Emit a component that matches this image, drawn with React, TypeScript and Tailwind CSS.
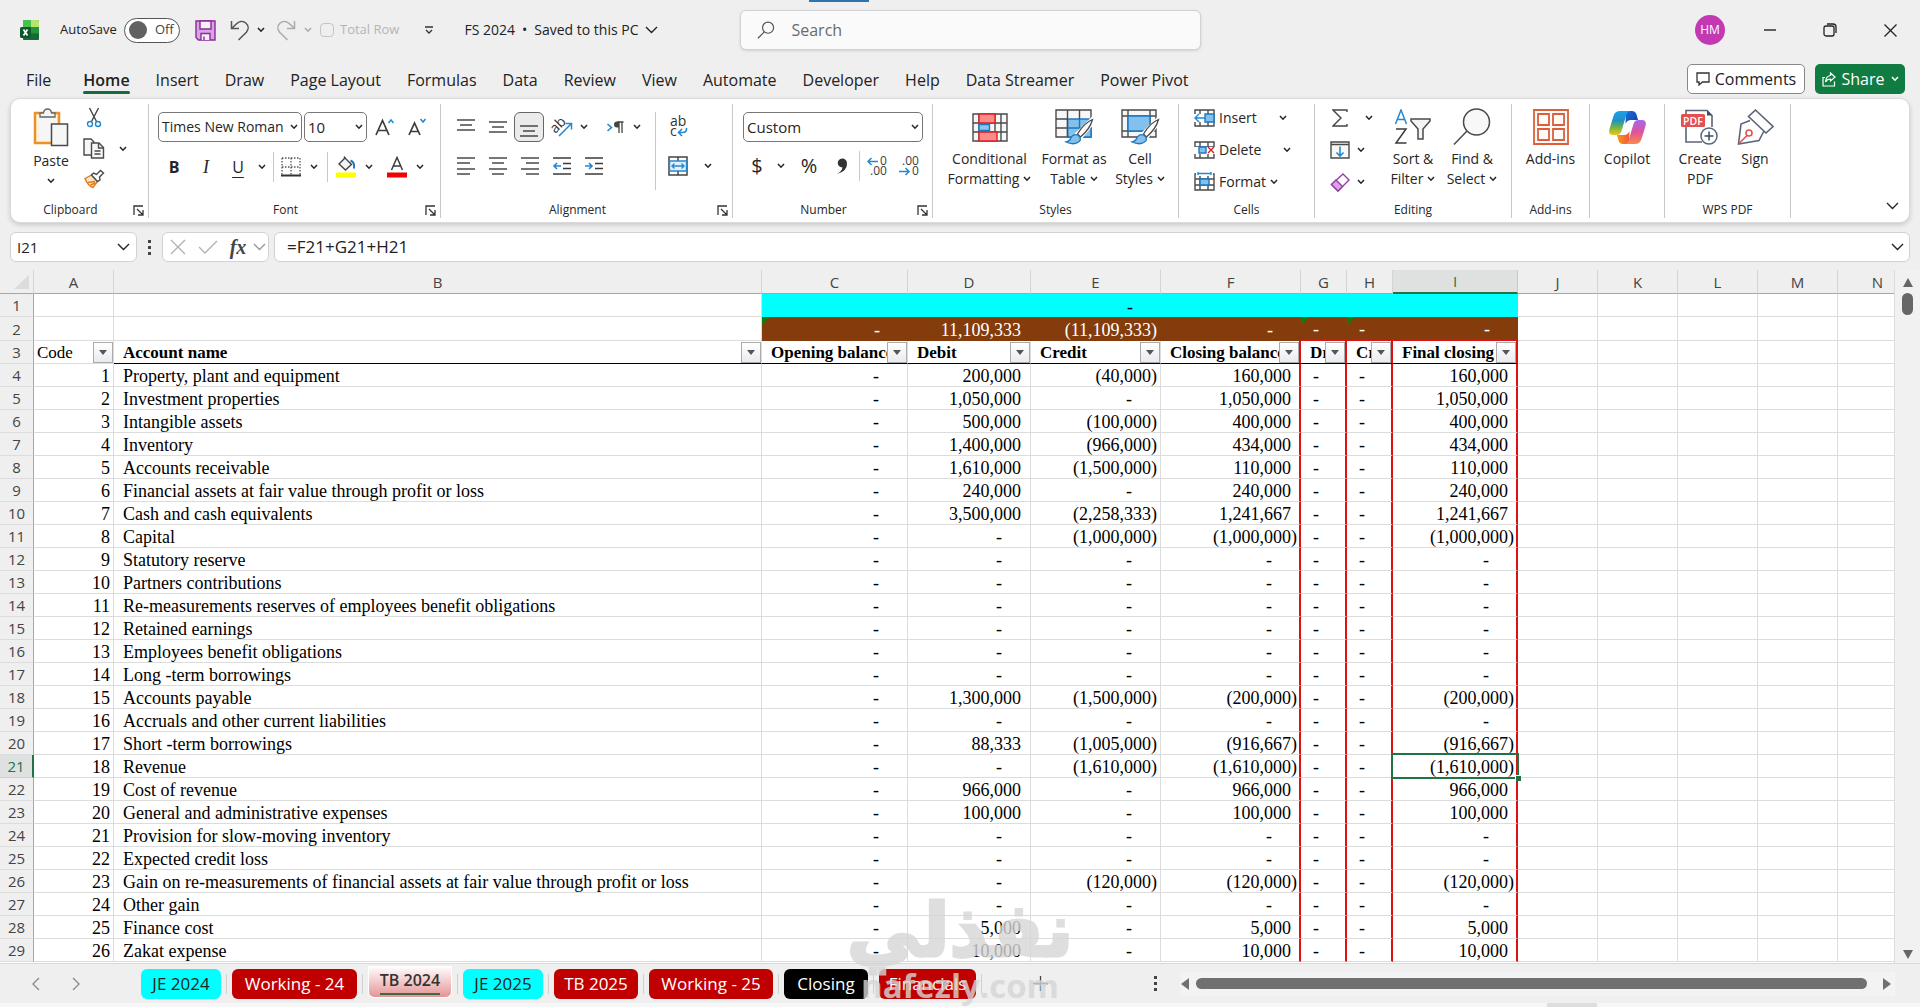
import React from 'react';

const UI = "font-['Open_Sans','Noto_Sans',sans-serif]";

function Chev({ big = false, className = '' }: { big?: boolean; className?: string }) {
  return big ? (
    <svg width="13" height="8" viewBox="0 0 13 8" className={className} fill="none" stroke="currentColor" strokeWidth="1.4">
      <path d="M1 1l5.5 5.5L12 1" />
    </svg>
  ) : (
    <svg width="8" height="6" viewBox="0 0 8 6" className={className} fill="none" stroke="currentColor" strokeWidth="1.5">
      <path d="M1 1l3 3.2L7 1" />
    </svg>
  );
}

function Btn({ label, className = '', children }: { label: string; className?: string; children?: React.ReactNode }) {
  return (
    <button type="button" aria-label={label} className={`flex shrink-0 items-center justify-center ${className}`}>
      {children}
    </button>
  );
}

function ChevBtn({ label, className = 'w-4' }: { label: string; className?: string }) {
  return (
    <Btn label={`${label} options`} className={`h-7 ${className}`}>
      <Chev />
    </Btn>
  );
}

function Group({ label, className, launcher = false, children }: { label?: string; className: string; launcher?: boolean; children: React.ReactNode }) {
  return (
    <section aria-label={label} className={`flex shrink-0 flex-col ${className}`}>
      <div className="mt-[5px] flex flex-col border-r border-[#c8c8c8]">
        <div className="h-[98px]">{children}</div>
        <div className="flex h-4 items-center">
          <span className="flex-1 text-center text-xs leading-4">{label}</span>
          {launcher && (
            <Btn label={`${label} settings`} className="mr-[2px] h-4 w-4">
              <svg width="11" height="11" viewBox="0 0 11 11" fill="none" stroke="#333" strokeWidth="1.3">
                <path d="M1 10V1h9M4 4l6 6M10 5v5H5" />
              </svg>
            </Btn>
          )}
        </div>
      </div>
    </section>
  );
}

function BigBtn({ icon, lines, chev = false, className }: { icon: React.ReactNode; lines: string[]; chev?: boolean; className: string }) {
  return (
    <button type="button" className={`flex shrink-0 flex-col items-center ${className}`}>
      <span className="mb-[3px] flex h-[38px] items-center">{icon}</span>
      {lines.map((l, i) => (
        <span key={l} className="flex items-center gap-1 whitespace-nowrap text-sm leading-5">
          {l}
          {chev && i === lines.length - 1 && <Chev />}
        </span>
      ))}
    </button>
  );
}

/* ---------- icons ---------- */

function Lines({ rows }: { rows: [number, number, number][] }) {
  return (
    <svg width="20" height="20" viewBox="0 0 20 20" stroke="#3b3b3b" strokeWidth="1.4">
      {rows.map(([x1, x2, y]) => (
        <path key={`${x1}-${y}`} d={`M${x1} ${y}H${x2}`} />
      ))}
    </svg>
  );
}

const ExcelLogo = () => (
  <svg width="20" height="21" viewBox="0 0 20 21">
    <rect x="3" y="0" width="16" height="20" rx="1.5" fill="#1a7a3e" />
    <path d="M3 1.5Q3 0 4.500 0H11V7H3z" fill="#46c24c" />
    <path d="M11 0h6.500Q19 0 19 1.500V7h-8z" fill="#b5e56b" />
    <path d="M11 7h8v6h-8z" fill="#26943f" />
    <path d="M3 14h16v4.500Q19 20 17.500 20h-13Q3 20 3 18.500z" fill="#156b33" />
    <rect x="0" y="7" width="11" height="11" rx="1.500" fill="#0c5a2c" />
    <path d="M3.500 9.500l4 6M7.500 9.500l-4 6" stroke="#fff" strokeWidth="1.700" />
  </svg>
);

const SaveIcon = () => (
  <svg width="21" height="21" viewBox="0 0 21 21" fill="#d9a3e4" stroke="#8a2a9b" strokeWidth="1.400">
    <path d="M1 1h19v19H3.500L1 17.500z" />
    <path d="M5 1h11v8H5z" fill="#f4f0f5" />
    <path d="M6 20v-6.500h9V20" fill="#f4f0f5" />
    <path d="M9 16.500V20" />
  </svg>
);

const UndoIcon = ({ flip = false }: { flip?: boolean }) => (
  <svg width="20" height="21" viewBox="0 0 20 21" fill="none" stroke="currentColor" strokeWidth="1.500" className={flip ? '-scale-x-100' : ''}>
    <path d="M1.500 1v7.500H9M1.800 8.300L6 4.200C9 1.200 13 .6 15.800 3c3 2.600 3 6.400.6 9.200L8.500 20" />
  </svg>
);

const PasteIcon = () => (
  <svg width="36" height="40" viewBox="0 0 36 40">
    <path d="M2 6h24v30H2z" fill="#fdf3df" stroke="#e8912d" strokeWidth="2.500" />
    <path d="M6 9h16v24H6z" fill="#f6f6f6" />
    <path d="M7 10V6h3.500Q11 2 14.500 2T18.500 6H22v4z" fill="#f5f5f5" stroke="#666" strokeWidth="1.300" />
    <path d="M18.500 17h16v21.500h-16z" fill="#f6f6f6" stroke="#4a4a4a" strokeWidth="1.500" />
  </svg>
);

const CutIcon = () => (
  <svg width="16" height="21" viewBox="0 0 16 21" fill="none" strokeWidth="1.400">
    <path d="M3.500 1l7 13.500M12.500 1l-7 13.500" stroke="#444" />
    <circle cx="4" cy="17" r="2.500" stroke="#2488d0" />
    <circle cx="12" cy="17" r="2.500" stroke="#2488d0" />
  </svg>
);

const CopyIcon = () => (
  <svg width="22" height="21" viewBox="0 0 22 21" fill="#f6f6f6" stroke="#4a4a4a" strokeWidth="1.400">
    <path d="M1 1h7l3 3v13H1z" />
    <path d="M8.500 5H16l4.500 4.500V20h-12z" />
    <path d="M15.500 5v5h5M11.500 13h6M11.500 16h6" fill="none" />
  </svg>
);

const BrushIcon = () => (
  <svg width="22" height="20" viewBox="0 0 22 20" strokeWidth="1.400">
    <path d="M2 9.500L8.500 6l6 6.500L10 18.500C6.500 17.500 4 14.500 2 9.500z" fill="#fbe3c4" stroke="#e07b1a" />
    <path d="M5 13.500l7-1M7.500 16l5-2" stroke="#e07b1a" fill="none" />
    <path d="M8.500 6l2-2 3 1.500 4-4 3 2.500-4 4 .5 3-2.500 1.500z" fill="#fff" stroke="#4a4a4a" />
  </svg>
);

const GrowA = ({ down = false }: { down?: boolean }) => (
  <svg width="22" height="20" viewBox="0 0 22 20" fill="none">
    <path d={down ? 'M3 18L8.500 6 14 18M5 14.500h7' : 'M2 18L8.500 3.500 15 18M4.500 13.500h8'} stroke="#3b3b3b" strokeWidth="1.700" />
    <path d={down ? 'M14.500 2l2.500 3L19.500 2' : 'M14.500 6L17 3l2.500 3'} stroke="#2488d0" strokeWidth="1.500" />
  </svg>
);

const BordersIcon = () => (
  <svg width="20" height="20" viewBox="0 0 20 20" fill="none" stroke="#555" strokeWidth="1.300">
    <path d="M1 1h18M1 10h18M1 1v17M10 1v17M19 1v17" strokeDasharray="1.500 1.500" />
    <path d="M0 18.500h20" stroke="#333" strokeWidth="2" />
  </svg>
);

const FillIcon = () => (
  <svg width="22" height="22" viewBox="0 0 22 22">
    <path d="M10 2l6.500 6.500-6 5.500-6.500-6z" fill="#f4f4f4" stroke="#444" strokeWidth="1.400" />
    <path d="M10 2l-1-1.500" stroke="#444" strokeWidth="1.400" />
    <path d="M15.500 4.500c3 1 4 4 3.500 8" stroke="#1f78b8" strokeWidth="2" fill="none" />
    <rect x="1" y="16.500" width="20" height="5" fill="#ff0" />
  </svg>
);

const FontColorIcon = () => (
  <svg width="22" height="22" viewBox="0 0 22 22" fill="none">
    <path d="M5.500 14L11 1.500 16.500 14M7.500 10h7" stroke="#3b3b3b" strokeWidth="1.500" />
    <rect x="1" y="16.500" width="20" height="5" fill="#f00000" />
  </svg>
);

const OrientIcon = () => (
  <svg width="22" height="22" viewBox="0 0 22 22" fill="none" className="overflow-visible">
    <text x="1" y="16" fontSize="14" fill="#333" transform="rotate(-45 5 13)" fontFamily="Open Sans">ab</text>
    <path d="M8 20L20 8M14.500 7.500H20.500V13.500" stroke="#2488d0" strokeWidth="1.500" />
  </svg>
);

const ParaIcon = () => (
  <svg width="18" height="16" viewBox="0 0 18 16" fill="none">
    <path d="M1.500 5l4 3.500-4 3.500" stroke="#2488d0" strokeWidth="1.600" />
    <path d="M13 3v11M16 3v11M17.500 3H11.500" stroke="#444" strokeWidth="1.300" />
    <path d="M13 2.500h-2a3 3 0 000 6h2z" fill="#444" />
  </svg>
);

const WrapIcon = () => (
  <svg width="20" height="22" viewBox="0 0 20 22" fill="none" className="overflow-visible">
    <text x="2" y="10" fontSize="14" fill="#333" fontFamily="Open Sans">ab</text>
    <text x="2" y="20" fontSize="14" fill="#333" fontFamily="Open Sans">c</text>
    <path d="M18.500 12q.5 4.500-4 4.500H10.500M14 13l-3.500 3.500 3.500 3.500" stroke="#2488d0" strokeWidth="1.600" />
  </svg>
);

const MergeIcon = () => (
  <svg width="20" height="20" viewBox="0 0 20 20" fill="none">
    <path d="M1 1h18v18H1zM10 1v4M10 15v4" stroke="#444" strokeWidth="1.500" />
    <path d="M1.500 5h17v10h-17z" fill="#e3f1fb" stroke="#2488d0" strokeWidth="1.400" />
    <path d="M4 10h12M6.500 7.500L4 10l2.500 2.500M13.500 7.500L16 10l-2.500 2.500" stroke="#2488d0" strokeWidth="1.400" />
  </svg>
);

const IndentIcon = ({ inc = false }: { inc?: boolean }) => (
  <svg width="20" height="20" viewBox="0 0 20 20" fill="none" strokeWidth="1.400">
    <path d="M1 2h18M11 7.500h8M11 12.500h8M1 18h18" stroke="#3b3b3b" />
    <path d={inc ? 'M1 10h7M5 7l3 3-3 3' : 'M2 10h7M5 7l-3 3 3 3'} stroke="#2488d0" strokeWidth="1.600" />
  </svg>
);

const DecimalIcon = ({ dec = false }: { dec?: boolean }) => (
  <svg width="22" height="22" viewBox="0 0 22 22" fill="none" className="overflow-visible">
    <g fill="#3b3b3b" fontSize="12" fontFamily="Open Sans">
      <text x={dec ? 4 : 14} y="10">{dec ? '.00' : '0'}</text>
      <text x={dec ? 14 : 4} y="20">{dec ? '0' : '.00'}</text>
    </g>
    <path d={dec ? 'M1 16.500h10M7.500 13l3.500 3.500L7.500 20' : 'M2 6.500h10M5.500 3L2 6.500 5.500 10'} stroke="#2488d0" strokeWidth="1.500" />
  </svg>
);

const CondIcon = () => (
  <svg width="36" height="29" viewBox="0 0 36 29" fill="#f7f7f7" strokeWidth="1.400">
    <path d="M1 1h34v27H1z" stroke="#4a4a4a" />
    <path d="M1 10h34M1 19h34M7 1v27M23 1v27M29 1v27" stroke="#4a4a4a" />
    <path d="M7 1h16v9H7zM7 19h18v9H7z" fill="#f98b8b" stroke="#d22" />
    <path d="M7 11.500h10.500v6H7z" fill="#8cc4ee" stroke="#1c78c0" />
  </svg>
);

const BrushOver = () => (
  <g>
    <path d="M37.500 10L22 25l3 4 13-16z" stroke="#fff" strokeWidth="4" fill="#fff" />
    <path d="M37.500 10.500Q29 14 22.500 25l3 3Q35 20 37.500 10.500z" fill="#fff" stroke="#4a4a4a" strokeWidth="1.300" />
    <path d="M11 33q4-1 5-4.500 3.500-5 8-1.500 3 4-.5 6-5 3.500-12.500 0z" fill="#83c0ec" stroke="#1c78c0" strokeWidth="1.300" />
  </g>
);

const TableIcon = () => (
  <svg width="39" height="36" viewBox="0 0 39 36" fill="#f7f7f7" strokeWidth="1.400">
    <path d="M1 1h35v27H1z" stroke="#4a4a4a" />
    <path d="M12.500 10H36v18H12.500z" fill="#83c0ec" stroke="#1c78c0" />
    <path d="M1 10h11M1 19h11M12.500 1v27M24.500 1v9" stroke="#4a4a4a" />
    <path d="M12.500 19H36M24.500 10v18" stroke="#1c78c0" />
    <BrushOver />
  </svg>
);

const CellStyleIcon = () => (
  <svg width="39" height="36" viewBox="0 0 39 36" fill="#f7f7f7" strokeWidth="1.400">
    <path d="M1 1h34v27H1zM1 7h34M1 22h34M7 1v27M29 1v27" stroke="#4a4a4a" />
    <path d="M7 7h22v15H7z" fill="#83c0ec" stroke="#1c78c0" />
    <BrushOver />
  </svg>
);

const CellsIcon = ({ kind }: { kind: 'insert' | 'delete' | 'format' }) => (
  <svg width="21" height="20" viewBox="0 0 21 20" fill="none" strokeWidth="1.400">
    <path d="M1 2h19v16H1zM1 7h19M1 13h19M6 2v16M14 2v16" stroke="#4a4a4a" />
    {kind === 'insert' && (
      <>
        <path d="M0 6h11v8H0z" fill="#fff" />
        <path d="M11 6h9v8h-9z" fill="#83c0ec" stroke="#1c78c0" />
        <path d="M1 10h10M5 6l-4 4 4 4" stroke="#2488d0" />
      </>
    )}
    {kind === 'delete' && (
      <>
        <path d="M0 7h21v7H0z" fill="#fff" />
        <path d="M5 7h7v6H5z" fill="#83c0ec" stroke="#1c78c0" />
        <path d="M14 7l6 6M20 7l-6 6" stroke="#e02020" />
      </>
    )}
    {kind === 'format' && (
      <>
        <path d="M2 0h17v4H2z" fill="#fff" />
        <path d="M4 1.500h13M4 0v3M17 0v3" stroke="#2488d0" />
        <path d="M6 7h9v6H6z" fill="#83c0ec" stroke="#1c78c0" />
      </>
    )}
  </svg>
);

const SumIcon = () => (
  <svg width="16" height="18" viewBox="0 0 16 18" fill="none" stroke="#444" strokeWidth="1.400">
    <path d="M15 3V1H1l8 8-8 8h14v-2" />
  </svg>
);

const FillDownIcon = () => (
  <svg width="20" height="18" viewBox="0 0 20 18" fill="#f7f7f7" stroke="#4a4a4a" strokeWidth="1.400">
    <path d="M1 1h18v16H1zM1 3.500h18" />
    <path d="M10 5.500V15M6.500 11.500L10 15l3.500-3.500" stroke="#2488d0" fill="none" strokeWidth="1.600" />
  </svg>
);

const EraserIcon = () => (
  <svg width="20" height="19" viewBox="0 0 20 19" strokeWidth="1.400" stroke="#963ca8">
    <path d="M13 1l6 6-11 11-6.500-6.500z" fill="#fff" />
    <path d="M6 7l6.500 6.500L8 18l-6.500-6.500z" fill="#d9a3e4" />
  </svg>
);

const SortIcon = () => (
  <svg width="38" height="37" viewBox="0 0 38 37" fill="none" strokeWidth="1.500">
    <path d="M1.500 15L7 1l5.500 14M3.500 10.500h7" stroke="#2488d0" />
    <path d="M2 20h10L2 34h10.500" stroke="#3b3b3b" />
    <path d="M17 10h19v2l-7 8v10h-5V20l-7-8z" fill="#f4f4f4" stroke="#4a4a4a" />
  </svg>
);

const FindIcon = () => (
  <svg width="38" height="38" viewBox="0 0 38 38" fill="#f8f8f8" stroke="#4a4a4a" strokeWidth="1.500">
    <circle cx="23.500" cy="14" r="13" />
    <path d="M14 23L1 36.500" />
  </svg>
);

const AddinsIcon = () => (
  <svg width="36" height="36" viewBox="0 0 36 36" fill="#fdfbfa" stroke="#dc5f3a" strokeWidth="1.800">
    <path d="M1 1h34v34H1z" />
    <path d="M5 5h11v11H5zM20 5h11v11H20zM5 20h11v11H5zM20 20h11v11H20z" />
  </svg>
);

const CopilotIcon = () => (
  <svg width="37" height="35" viewBox="0 0 37 35">
    <defs>
      <linearGradient id="cpA" x1="0" y1="0" x2="0" y2="1">
        <stop offset="0" stopColor="#1aa2ea" />
        <stop offset=".4" stopColor="#2290c4" />
        <stop offset=".7" stopColor="#76b83c" />
        <stop offset="1" stopColor="#f3c51c" />
      </linearGradient>
      <linearGradient id="cpB" x1="0" y1="0" x2="0" y2="1">
        <stop offset="0" stopColor="#a566ee" />
        <stop offset=".5" stopColor="#e0529b" />
        <stop offset="1" stopColor="#f88a48" />
      </linearGradient>
      <linearGradient id="cpC" x1="0" y1="0" x2="1" y2="1">
        <stop offset="0" stopColor="#1a6fe0" />
        <stop offset="1" stopColor="#163e9e" />
      </linearGradient>
      <linearGradient id="cpD" x1="0" y1="0" x2="1" y2="0">
        <stop offset="0" stopColor="#f39a1e" />
        <stop offset="1" stopColor="#f2573a" />
      </linearGradient>
    </defs>
    <path d="M17 1h6q3.500 0 4.500 3.500L29 10h-7q-4 0-5.500 4z" fill="url(#cpC)" />
    <path d="M20 34h-6q-3.500 0-4.500-3.500L8 25h7q4 0 5.500-4z" fill="url(#cpD)" />
    <path d="M11 1h9.500q-2.500 1-3.500 5l-4.500 15q-1.200 4-5 4H4q-5 0-3.500-6L4.500 6Q6 1 11 1z" fill="url(#cpA)" />
    <path d="M26 34h-9.500q2.500-1 3.500-5l4.500-15q1.200-4 5-4H33q5 0 3.500 6l-4 13Q31 34 26 34z" fill="url(#cpB)" />
  </svg>
);

const PdfIcon = () => (
  <svg width="38" height="36" viewBox="0 0 38 36" fill="none">
    <path d="M5 6V1.500h21l5 5V18M5 18v15h16" stroke="#5b6478" strokeWidth="1.600" />
    <path d="M26 1.500V6.500h5z" fill="#3f4a63" />
    <rect x="0" y="5" width="24" height="13" rx="1.500" fill="#e2504f" />
    <text x="2" y="15.500" fontSize="10.500" fill="#fff" fontFamily="Open Sans" fontWeight="600">PDF</text>
    <circle cx="28" cy="27" r="8" stroke="#5b6478" strokeWidth="1.500" fill="#fff" />
    <path d="M28 22.500v9M23.500 27h9" stroke="#3f4a63" strokeWidth="1.500" />
  </svg>
);

const SignIcon = () => (
  <svg width="37" height="36" viewBox="0 0 37 36" fill="none" stroke="#5b6478" strokeWidth="1.600">
    <path d="M18.500 1L36 17.500l-7 6.500L11.500 7.500z" />
    <path d="M13 11.500L4 15 1.500 35 22 31.500 27 22" />
    <circle cx="12" cy="24" r="3" stroke="#e2504f" />
    <path d="M10 26.500L2 34.500" stroke="#e2504f" />
  </svg>
);

/* ---------- data ---------- */

const ribbonTabs = ['File', 'Home', 'Insert', 'Draw', 'Page Layout', 'Formulas', 'Data', 'Review', 'View', 'Automate', 'Developer', 'Help', 'Data Streamer', 'Power Pivot'];

// [account name, debit, credit, closing balance]
const accounts: [string, string, string, string][] = [
  ['Property, plant and equipment', '200,000', '(40,000)', '160,000'],
  ['Investment properties', '1,050,000', '-', '1,050,000'],
  ['Intangible assets', '500,000', '(100,000)', '400,000'],
  ['Inventory', '1,400,000', '(966,000)', '434,000'],
  ['Accounts receivable', '1,610,000', '(1,500,000)', '110,000'],
  ['Financial assets at fair value through profit or loss', '240,000', '-', '240,000'],
  ['Cash and cash equivalents', '3,500,000', '(2,258,333)', '1,241,667'],
  ['Capital', '-', '(1,000,000)', '(1,000,000)'],
  ['Statutory reserve', '-', '-', '-'],
  ['Partners contributions', '-', '-', '-'],
  ['Re-measurements reserves of employees benefit obligations', '-', '-', '-'],
  ['Retained earnings', '-', '-', '-'],
  ['Employees benefit obligations', '-', '-', '-'],
  ['Long -term borrowings', '-', '-', '-'],
  ['Accounts payable', '1,300,000', '(1,500,000)', '(200,000)'],
  ['Accruals and other current liabilities', '-', '-', '-'],
  ['Short -term borrowings', '88,333', '(1,005,000)', '(916,667)'],
  ['Revenue', '-', '(1,610,000)', '(1,610,000)'],
  ['Cost of revenue', '966,000', '-', '966,000'],
  ['General and administrative expenses', '100,000', '-', '100,000'],
  ['Provision for slow-moving inventory', '-', '-', '-'],
  ['Expected credit loss', '-', '-', '-'],
  ['Gain on re-measurements of financial assets at fair value through profit or loss', '-', '(120,000)', '(120,000)'],
  ['Other gain', '-', '-', '-'],
  ['Finance cost', '5,000', '-', '5,000'],
  ['Zakat expense', '10,000', '-', '10,000'],
];

const columns: [string, string][] = [
  ['A', 'w-20'],
  ['B', 'w-[648px]'],
  ['C', 'w-[146px]'],
  ['D', 'w-[123px]'],
  ['E', 'w-[130px]'],
  ['F', 'w-[140px]'],
  ['G', 'w-[46px]'],
  ['H', 'w-[46px]'],
  ['I', 'w-[125px]'],
  ['J', 'w-20'],
  ['K', 'w-20'],
  ['L', 'w-20'],
  ['M', 'w-20'],
  ['N', 'w-20'],
];

const CELL = 'p-0 pt-[2px] leading-5';
const GRID = 'border-b border-r border-[#dcdcdc]';
const RED = 'border-b border-r-2 border-b-[#dcdcdc] border-r-[#dd1111]';

function padFor(v: string) {
  if (v === '-') return 'pr-7';
  return v.startsWith('(') ? 'pr-[3px]' : 'pr-[9px]';
}

function Num({ v, red = false, active = false }: { v: string; red?: boolean; active?: boolean }) {
  return (
    <td className={`relative text-right ${CELL} ${red ? RED : GRID}`}>
      <div className={red ? '-mr-px' : ''}>
        <div className={padFor(v)}>{v}</div>
      </div>
      {active && (
        <span className="absolute -bottom-[2px] -left-[2px] -right-[3px] -top-[2px] z-10 border-2 border-[#217346]">
          <span className="absolute -bottom-[4px] -right-[4px] h-[6px] w-[6px] border-l border-t border-white bg-[#217346]" />
        </span>
      )}
    </td>
  );
}

function RowHead({ n }: { n: number }) {
  const active = n === 21;
  return (
    <th
      scope="row"
      className={`border-b p-0 text-center font-['Open_Sans','Noto_Sans',sans-serif] text-[15px] font-normal leading-[22px] ${
        active ? 'border-r-2 border-b-[#d0d0d0] border-r-[#217346] bg-[#dfe1e0] text-[#217346]' : 'border-r border-b-[#dcdcdc] border-r-[#a6a6a6] bg-[#efefef] text-[#444]'
      }`}
    >
      {n}
    </th>
  );
}

function Filter({ label, name, className = '' }: { label: string; name: string; className?: string }) {
  return (
    <div className={`flex h-[22px] items-center overflow-hidden whitespace-nowrap ${className}`}>
      <span className="min-w-0 flex-1 overflow-hidden pt-[2px] leading-5">{label}</span>
      <button
        type="button"
        aria-label={`Filter ${name}`}
        className="flex h-[21px] w-5 shrink-0 items-center justify-center border border-[#ababab] bg-gradient-to-b from-white to-[#e9ebf0]"
      >
        <span className="border-x-4 border-t-[5px] border-x-transparent border-t-[#555]" />
      </button>
    </div>
  );
}

function Blank({ n = 5 }: { n?: number }) {
  return (
    <>
      {Array.from({ length: n }, (_, i) => (
        <td key={i} className={GRID} />
      ))}
    </>
  );
}

function Sheet() {
  const tri = <span className="absolute left-0 top-0 border-r-8 border-t-8 border-r-transparent border-t-[#107c10]" />;
  return (
    <table className="w-[1918px] table-fixed border-separate border-spacing-0 bg-white font-['Liberation_Serif',serif] text-lg text-black">
      <colgroup>
        <col className="w-[34px]" />
        {columns.map(([c, w]) => (
          <col key={c} className={w} />
        ))}
      </colgroup>
      <thead>
        <tr className={`h-6 bg-[#efefef] ${UI} text-[15px] leading-[22px] text-[#444]`}>
          <th className="border-b border-r border-b-[#a6a6a6] border-r-[#d4d4d4] p-0">
            <svg width="16" height="14" viewBox="0 0 16 14" className="ml-[14px]">
              <path d="M15 0v14H0z" fill="#dcdcdc" />
            </svg>
          </th>
          {columns.map(([c]) => (
            <th
              key={c}
              scope="col"
              className={
                c === 'I'
                  ? 'border-b-2 border-r border-b-[#217346] border-r-[#c9c9c9] bg-[#dfe1e0] p-0 font-normal text-[#217346]'
                  : 'border-b border-r border-b-[#a6a6a6] border-r-[#d4d4d4] p-0 font-normal'
              }
            >
              {c}
            </th>
          ))}
        </tr>
      </thead>
      <tbody>
        <tr className="h-[23px]">
          <RowHead n={1} />
          <td className={GRID} />
          <td className={GRID} />
          <td colSpan={7} className={`bg-[#00ffff] ${CELL}`}>
            <div className="ml-[269px] w-[130px] pr-7 text-right">-</div>
          </td>
          <Blank />
        </tr>
        <tr className="h-6 text-white">
          <RowHead n={2} />
          <td className={GRID} />
          <td className={GRID} />
          <td className={`relative bg-[#843c0c] text-right ${CELL}`}>{tri}<div className="pr-7">-</div></td>
          <td className={`bg-[#843c0c] text-right ${CELL}`}><div className="pr-[10px]">11,109,333</div></td>
          <td className={`bg-[#843c0c] text-right ${CELL}`}><div className="pr-1">(11,109,333)</div></td>
          <td className={`bg-[#843c0c] text-right ${CELL}`}><div className="pr-7">-</div></td>
          <td className={`relative border-b-2 border-[#dd1111] bg-[#843c0c] ${CELL}`}>{tri}<div className="pl-3">-</div></td>
          <td className={`relative border-b-2 border-[#dd1111] bg-[#843c0c] ${CELL}`}>{tri}<div className="pl-3">-</div></td>
          <td className={`border-b-2 border-[#dd1111] bg-[#843c0c] text-right ${CELL}`}><div className="pr-7">-</div></td>
          <Blank />
        </tr>
        <tr className="h-[23px] text-[17px] font-bold">
          <RowHead n={3} />
          <td className={`p-0 font-normal ${GRID}`}>
            <Filter label="Code" name="Code" className="pl-[3px]" />
          </td>
          {['Account name', 'Opening balance', 'Debit', 'Credit'].map((h) => (
            <td key={h} className="border-b border-r border-b-black border-r-[#dcdcdc] p-0">
              <Filter label={h} name={h} className="pl-[9px]" />
            </td>
          ))}
          {['Closing balance', 'Dr', 'Cr', 'Final closing'].map((h) => (
            <td key={h} className="border-b border-r-2 border-b-black border-r-[#dd1111] p-0">
              <Filter label={h} name={h} className="pl-[9px]" />
            </td>
          ))}
          <Blank />
        </tr>
        {accounts.map(([name, debit, credit, closing], i) => (
          <tr key={name} className="h-[23px]">
            <RowHead n={i + 4} />
            <td className={`text-right ${CELL} ${GRID}`}><div className="pr-[3px]">{i + 1}</div></td>
            <td className={`${CELL} ${GRID}`}><div className="pl-[9px]">{name}</div></td>
            <Num v="-" />
            <Num v={debit} />
            <Num v={credit} />
            <Num v={closing} red />
            <td className={`${CELL} ${RED}`}><div className="pl-3">-</div></td>
            <td className={`${CELL} ${RED}`}><div className="pl-3">-</div></td>
            <Num v={closing} red active={i + 4 === 21} />
            <Blank />
          </tr>
        ))}
      </tbody>
    </table>
  );
}

const sheetTabs: [string, string][] = [
  ['JE 2024', 'w-20 bg-[#00ffff] text-[#222]'],
  ['Working - 24', 'w-[125px] bg-[#c00000] text-white'],
  ['TB 2024', ''],
  ['JE 2025', 'w-20 bg-[#00ffff] text-[#222]'],
  ['TB 2025', 'w-[84px] bg-[#c00000] text-white'],
  ['Working - 25', 'w-[124px] bg-[#c00000] text-white'],
  ['Closing', 'w-[84px] bg-black text-white'],
  ['Financials', 'w-[97px] bg-[#c00000] text-white'],
];

/* ---------- page ---------- */

function TitleBar() {
  return (
    <header className="relative flex h-[60px] items-center">
      <div className="flex w-[740px] shrink-0 items-center pl-5 text-[13px]">
        <ExcelLogo />
        <label className="ml-5 flex items-center">
          <span className="w-[64px]">AutoSave</span>
          <input type="checkbox" role="switch" className="sr-only" />
          <span className="flex h-[25px] w-14 items-center gap-2 rounded-full border border-[#555] bg-white pl-1 text-[#444]">
            <span className="h-[18px] w-[18px] rounded-full bg-[#616161]" />
            Off
          </span>
        </label>
        <Btn label="Save" className="ml-[15px]"><SaveIcon /></Btn>
        <Btn label="Undo" className="ml-[14px] text-[#555]"><UndoIcon /></Btn>
        <Btn label="Undo history" className="w-[22px]"><Chev /></Btn>
        <Btn label="Redo" className="ml-1 text-[#aaa]"><UndoIcon flip /></Btn>
        <Btn label="Redo history" className="w-6 text-[#aaa]"><Chev /></Btn>
        <label className="flex items-center gap-[6px] text-[#b5b5b5]">
          <input type="checkbox" disabled className="h-[14px] w-[14px] appearance-none rounded-sm border border-[#c4c4c4]" />
          Total Row
        </label>
        <Btn label="Customize toolbar" className="ml-5 w-5">
          <svg width="10" height="8" viewBox="0 0 10 8" fill="none" stroke="#333" strokeWidth="1.300"><path d="M1 1h8M2 4l3 3 3-3" /></svg>
        </Btn>
        <button type="button" className="ml-[25px] flex items-center gap-[7px] whitespace-nowrap text-sm">
          <span>FS 2024</span><span>•</span><span>Saved to this PC</span>
          <Chev big />
        </button>
      </div>
      <span className="absolute left-[809px] top-0 h-[2px] w-[60px] bg-[#2e75b0]" />
      <label className="flex h-10 w-[461px] items-center gap-4 rounded-md border border-[#d2d2d2] bg-[#fafafa] pl-4 shadow-sm">
        <svg width="20" height="20" viewBox="0 0 20 20" fill="none" stroke="#555" strokeWidth="1.300">
          <circle cx="12" cy="7.500" r="6" /><path d="M8 12L1 19" />
        </svg>
        <input aria-label="Search" placeholder="Search" className="w-full bg-transparent text-base outline-none placeholder:text-[#6a6a6a]" />
      </label>
      <div className="ml-auto flex items-center">
        <Btn label="Account" className="mr-[15px] h-[30px] w-[30px] rounded-full bg-[#c239b3] text-xs text-white">HM</Btn>
        <Btn label="Minimize" className="h-8 w-[60px]"><svg width="12" height="2"><path d="M0 1h12" stroke="#222" strokeWidth="1.400" /></svg></Btn>
        <Btn label="Restore" className="h-8 w-[60px]">
          <svg width="14" height="14" viewBox="0 0 14 14" fill="none" stroke="#222" strokeWidth="1.300">
            <rect x="1" y="3" width="10" height="10" rx="2" /><path d="M4 1h6q3 0 3 3v6" />
          </svg>
        </Btn>
        <Btn label="Close" className="h-8 w-[60px]"><svg width="13" height="13"><path d="M.5.5l12 12M12.500.5l-12 12" stroke="#222" strokeWidth="1.300" /></svg></Btn>
      </div>
    </header>
  );
}

function TabBar() {
  return (
    <nav className="flex h-[38px] items-center pl-[26px] pr-[15px]">
      <div className="flex gap-[26px] pt-[2px] text-base leading-5">
        {ribbonTabs.map((t) => (
          <button
            key={t}
            type="button"
            className={
              t === 'Home'
                ? "relative ml-[6px] whitespace-nowrap font-semibold after:absolute after:-bottom-[4px] after:left-0 after:h-[3px] after:w-full after:rounded after:bg-[#176b3c] after:content-['']"
                : 'whitespace-nowrap'
            }
          >
            {t}
          </button>
        ))}
      </div>
      <button type="button" className="ml-auto flex h-[30px] w-[118px] items-center justify-center gap-[5px] rounded-[5px] border border-[#888] bg-white text-base">
        <svg width="14" height="14" viewBox="0 0 14 14" fill="none" stroke="#333" strokeWidth="1.300"><path d="M1 1h12v9H6.500L3 13v-3H1z" /></svg>
        Comments
      </button>
      <button type="button" className="ml-[10px] flex h-[30px] w-[90px] items-center justify-center gap-[6px] rounded-[5px] bg-[#107c41] text-base text-white">
        <svg width="14" height="15" viewBox="0 0 14 15" fill="none" stroke="#fff" strokeWidth="1.200">
          <path d="M3 5.500H1V14h11.500V9.500M8.500 1l4.500 4-4.500 4V7Q5 7 3.500 10 4 4 8.500 3.500z" />
        </svg>
        Share
        <Chev />
      </button>
    </nav>
  );
}

function ComboBox({ value, name, className, size = 'text-[15px]' }: { value: string; name: string; className: string; size?: string }) {
  return (
    <span className={`relative flex shrink-0 items-center ${className}`}>
      <select aria-label={name} className={`h-[30px] w-full appearance-none overflow-hidden rounded-[5px] border border-[#777] bg-white pl-[3px] pr-4 ${size}`}>
        <option>{value}</option>
      </select>
      <Chev className="pointer-events-none absolute right-1" />
    </span>
  );
}

function Ribbon() {
  const vline = <span className="h-[30px] w-px shrink-0 bg-[#c8c8c8]" />;
  return (
    <div className="mx-[10px] flex h-[125px] rounded-[10px] border border-[#dadada] bg-white text-[#262626] shadow-[0_2px_5px_rgba(0,0,0,0.16)]">
      <Group label="Clipboard" className="w-[138px]" launcher>
        <div className="flex pt-[3px]">
          <button type="button" className="ml-[18px] flex w-11 flex-col items-center text-sm leading-5">
            <PasteIcon />
            <span className="mt-1">Paste</span>
            <Chev className="mt-[7px]" />
          </button>
          <div className="ml-[10px] flex w-[22px] flex-col items-center gap-[10px]">
            <Btn label="Cut"><CutIcon /></Btn>
            <Btn label="Copy"><CopyIcon /></Btn>
            <Btn label="Format Painter"><BrushIcon /></Btn>
          </div>
          <ChevBtn label="Copy" className="ml-[10px] mt-7 w-4" />
        </div>
      </Group>

      <Group label="Font" className="w-[292px]" launcher>
        <div className="flex items-center pl-[9px] pt-2">
          <ComboBox name="Font" value="Times New Roman" className="w-[144px]" size="text-sm" />
          <ComboBox name="Font size" value="10" className="ml-[2px] w-[63px]" />
          <Btn label="Increase font size" className="ml-[7px] h-7 w-[22px]"><GrowA /></Btn>
          <Btn label="Decrease font size" className="ml-[10px] h-7 w-[22px]"><GrowA down /></Btn>
        </div>
        <div className="mt-[10px] flex items-center pl-[9px]">
          <Btn label="Bold" className="w-8 text-base font-bold">B</Btn>
          <Btn label="Italic" className="w-8 font-['Liberation_Serif',serif] text-lg italic">I</Btn>
          <Btn label="Underline" className="w-8 text-base underline underline-offset-4">U</Btn>
          <ChevBtn label="Underline" />
          <span className="w-[3px]" />
          {vline}
          <Btn label="Borders" className="ml-[7px] w-5"><BordersIcon /></Btn>
          <ChevBtn label="Borders" className="ml-[5px] w-4" />
          <span className="w-[5px]" />
          {vline}
          <Btn label="Fill color" className="ml-[7px] w-[22px]"><FillIcon /></Btn>
          <ChevBtn label="Fill color" className="ml-1 w-4" />
          <Btn label="Font color" className="ml-[9px] w-[22px]"><FontColorIcon /></Btn>
          <ChevBtn label="Font color" className="ml-1 w-4" />
        </div>
      </Group>

      <Group label="Alignment" className="w-[292px]" launcher>
        <div className="flex">
          <div className="w-[214px] pl-[9px]">
            <div className="flex items-center pt-2">
              <Btn label="Top align" className="h-[30px] w-8"><Lines rows={[[1, 19, 3], [4, 16, 8], [1, 19, 13]]} /></Btn>
              <Btn label="Middle align" className="h-[30px] w-8"><Lines rows={[[1, 19, 5], [4, 16, 10], [1, 19, 15]]} /></Btn>
              <Btn label="Bottom align" className="h-[30px] w-[30px] rounded-md border border-[#666] bg-[#ebebeb] pt-1"><Lines rows={[[1, 19, 7], [4, 16, 12], [1, 19, 17]]} /></Btn>
              <Btn label="Orientation" className="ml-[7px] w-[22px]"><OrientIcon /></Btn>
              <ChevBtn label="Orientation" className="ml-[3px] w-4" />
              <Btn label="Text direction" className="ml-[14px] w-[18px]"><ParaIcon /></Btn>
              <ChevBtn label="Text direction" className="ml-[5px] w-4" />
            </div>
            <div className="mt-[9px] flex items-center">
              <Btn label="Align left" className="h-[30px] w-8"><Lines rows={[[1, 19, 2], [1, 14, 7], [1, 19, 13], [1, 14, 18]]} /></Btn>
              <Btn label="Center" className="h-[30px] w-8"><Lines rows={[[1, 19, 2], [4, 16, 7], [1, 19, 13], [4, 16, 18]]} /></Btn>
              <Btn label="Align right" className="h-[30px] w-8"><Lines rows={[[1, 19, 2], [6, 19, 7], [1, 19, 13], [6, 19, 18]]} /></Btn>
              <Btn label="Decrease indent" className="h-[30px] w-8"><IndentIcon /></Btn>
              <Btn label="Increase indent" className="h-[30px] w-8"><IndentIcon inc /></Btn>
            </div>
          </div>
          <div className="mt-2 h-[78px] border-l border-[#c8c8c8] pl-3">
            <Btn label="Wrap text" className="h-[30px] w-5"><WrapIcon /></Btn>
            <div className="mt-[9px] flex items-center">
              <Btn label="Merge and center" className="h-[30px] w-5"><MergeIcon /></Btn>
              <ChevBtn label="Merge and center" className="ml-3 w-4" />
            </div>
          </div>
        </div>
      </Group>

      <Group label="Number" className="w-[200px]" launcher>
        <div className="pl-[10px] pt-2">
          <ComboBox name="Number format" value="Custom" className="w-[180px]" />
          <div className="mt-[9px] flex items-center">
            <Btn label="Currency" className="h-[30px] w-7 text-xl">$</Btn>
            <ChevBtn label="Currency" className="ml-[2px] w-4" />
            <Btn label="Percent" className="ml-2 h-[30px] w-6 text-xl">%</Btn>
            <Btn label="Comma style" className="ml-[13px] h-[30px] w-4">
              <svg width="12" height="18" viewBox="0 0 12 18"><path d="M1 17q5-3 5.500-6.500A4.500 4.500 0 116 1.500q5 0 5 5.500 0 7.500-10 10z" fill="#333" /></svg>
            </Btn>
            <span className="w-[9px]" />
            {vline}
            <Btn label="Increase decimal" className="ml-[6px] w-[22px]"><DecimalIcon /></Btn>
            <Btn label="Decrease decimal" className="ml-[10px] w-[22px]"><DecimalIcon dec /></Btn>
          </div>
        </div>
      </Group>

      <Group label="Styles" className="w-[246px]">
        <div className="flex pl-2 pt-1">
          <BigBtn className="w-[97px]" icon={<CondIcon />} lines={['Conditional', 'Formatting']} chev />
          <BigBtn className="w-[72px]" icon={<TableIcon />} lines={['Format as', 'Table']} chev />
          <BigBtn className="w-[60px]" icon={<CellStyleIcon />} lines={['Cell', 'Styles']} chev />
        </div>
      </Group>

      <Group label="Cells" className="w-[136px]">
        <div className="flex flex-col gap-1 pl-[15px]">
          {(['insert', 'delete', 'format'] as const).map((k) => (
            <div key={k} className="flex h-7 items-center">
              <button type="button" className="flex items-center gap-1 text-sm capitalize">
                <CellsIcon kind={k} />
                {k}
              </button>
              <ChevBtn label={k} className={k === 'format' ? 'w-4' : 'ml-4 w-5'} />
            </div>
          ))}
        </div>
      </Group>

      <Group label="Editing" className="w-[197px]">
        <div className="flex">
          <div className="flex w-16 flex-col gap-1 pl-[14px]">
            <div className="flex items-center"><Btn label="AutoSum" className="h-7 w-[22px]"><SumIcon /></Btn><ChevBtn label="AutoSum" className="ml-[10px] w-4" /></div>
            <div className="flex items-center"><Btn label="Fill" className="h-7 w-[22px]"><FillDownIcon /></Btn><ChevBtn label="Fill" className="ml-[2px] w-4" /></div>
            <div className="flex items-center"><Btn label="Clear" className="h-7 w-[22px]"><EraserIcon /></Btn><ChevBtn label="Clear" className="ml-[2px] w-4" /></div>
          </div>
          <div className="flex pl-1 pt-1">
            <BigBtn className="w-[60px]" icon={<SortIcon />} lines={['Sort &', 'Filter']} chev />
            <BigBtn className="w-[58px]" icon={<FindIcon />} lines={['Find &', 'Select']} chev />
          </div>
        </div>
      </Group>

      <Group label="Add-ins" className="w-[78px]">
        <div className="pt-1"><BigBtn className="w-full" icon={<AddinsIcon />} lines={['Add-ins']} /></div>
      </Group>
      <Group className="w-[75px]">
        <div className="pt-1"><BigBtn className="w-full" icon={<CopilotIcon />} lines={['Copilot']} /></div>
      </Group>
      <Group label="WPS PDF" className="w-[126px]">
        <div className="flex pl-[6px] pt-1">
          <BigBtn className="w-[58px]" icon={<PdfIcon />} lines={['Create', 'PDF']} />
          <BigBtn className="w-[52px]" icon={<SignIcon />} lines={['Sign']} />
        </div>
      </Group>
      <Btn label="Collapse ribbon" className="mb-3 ml-auto mr-[10px] self-end"><Chev big /></Btn>
    </div>
  );
}

function FormulaBar() {
  return (
    <div className="mx-[10px] mt-[9px] flex h-[30px] items-stretch text-[15px]">
      <div className="flex w-[127px] items-center rounded-md border border-[#d2d2d2] bg-white pl-[6px] pr-[6px]">
        <input aria-label="Name box" defaultValue="I21" className="w-full min-w-0 bg-transparent outline-none" />
        <Chev big className="shrink-0" />
      </div>
      <div className="flex w-[25px] flex-col items-center justify-center gap-[3px]">
        <span className="h-[3px] w-[3px] bg-[#444]" />
        <span className="h-[3px] w-[3px] bg-[#444]" />
        <span className="h-[3px] w-[3px] bg-[#444]" />
      </div>
      <div className="flex w-[107px] items-center rounded-md border border-[#d2d2d2] bg-white pl-[7px]">
        <Btn label="Cancel" className="w-4"><svg width="16" height="16"><path d="M1 1l14 14M15 1L1 15" stroke="#b0b0b0" strokeWidth="1.300" /></svg></Btn>
        <Btn label="Enter" className="ml-3 w-5"><svg width="20" height="14" fill="none"><path d="M1 7l6 6L19 1" stroke="#b0b0b0" strokeWidth="1.300" /></svg></Btn>
        <Btn label="Insert function" className="ml-[10px] w-5 font-['Liberation_Serif',serif] text-xl font-bold italic text-[#444]">fx</Btn>
        <Chev big className="ml-[5px] text-[#999]" />
      </div>
      <div className="ml-[5px] flex flex-1 items-center rounded-md border border-[#d2d2d2] bg-white pl-3 pr-[5px]">
        <input aria-label="Formula" defaultValue="=F21+G21+H21" className="flex-1 bg-transparent text-[17px] leading-6 outline-none" />
        <Chev big />
      </div>
    </div>
  );
}

function SheetBar() {
  return (
    <footer className="flex h-10 items-center border-t border-[#d9d9d9] text-[17px]">
      <div className="flex w-[141px] shrink-0 items-center pl-[30px] text-[#8a8a8a]">
        <Btn label="Previous sheet" className="w-3"><svg width="8" height="14" fill="none"><path d="M7 1L1 7l6 6" stroke="currentColor" strokeWidth="1.300" /></svg></Btn>
        <Btn label="Next sheet" className="ml-7 w-3"><svg width="8" height="14" fill="none"><path d="M1 1l6 6-6 6" stroke="currentColor" strokeWidth="1.300" /></svg></Btn>
      </div>
      <div className="flex shrink-0 items-center">
        {sheetTabs.map(([name, cls]) => (
          <React.Fragment key={name}>
            {cls ? (
              <button type="button" className={`h-[30px] whitespace-nowrap rounded-md leading-7 ${cls}`}>{name}</button>
            ) : (
              <button type="button" className="mb-1 flex h-8 w-[84px] justify-center rounded-b-md border border-t-0 border-white bg-gradient-to-b from-white to-[#e39497] text-base font-semibold text-[#333]">
                <span className="h-[29px] border-b-2 border-[#3b6b3f] leading-7">{name}</span>
              </button>
            )}
            <span className="mx-[5px] h-5 w-px bg-[#d0d0d0]" />
          </React.Fragment>
        ))}
      </div>
      <Btn label="New sheet" className="ml-[43px] w-5"><svg width="15" height="15"><path d="M7.500 0v15M0 7.500h15" stroke="#444" strokeWidth="1.300" /></svg></Btn>
      <div className="ml-[102px] flex w-[6px] shrink-0 flex-col items-center gap-[3px]">
        <span className="h-[3px] w-[3px] bg-[#444]" />
        <span className="h-[3px] w-[3px] bg-[#444]" />
        <span className="h-[3px] w-[3px] bg-[#444]" />
      </div>
      <div className="ml-[22px] mr-[25px] flex h-6 flex-1 items-center bg-[#f3f3f3] pl-[1px] pr-1">
        <span className="border-y-[6px] border-r-8 border-y-transparent border-r-[#707070]" />
        <span className="ml-[7px] h-[11px] flex-1 rounded-full bg-[#707070]" />
        <span className="ml-4 border-y-[6px] border-l-8 border-y-transparent border-l-[#707070]" />
      </div>
    </footer>
  );
}

export default function App() {
  return (
    <div className={`relative flex min-h-screen flex-col overflow-hidden bg-[#efefef] text-[#222] ${UI}`}>
      <TitleBar />
      <TabBar />
      <Ribbon />
      <FormulaBar />
      <main className="mt-2 flex">
        <div className="min-w-0 flex-1 overflow-hidden border-r border-[#dcdcdc] bg-white pb-px">
          <Sheet />
        </div>
        <div className="flex w-[25px] shrink-0 flex-col items-center bg-[#f1f1f1] py-1">
          <span className="mt-1 border-x-[5px] border-b-[9px] border-x-transparent border-b-[#666]" />
          <span className="mt-[6px] h-[22px] w-[11px] rounded-full bg-[#666]" />
          <span className="mt-auto border-x-[5px] border-t-[9px] border-x-transparent border-t-[#666]" />
        </div>
      </main>
      <SheetBar />
      <div className="flex h-1 justify-end bg-[#f7f7f7] pr-[323px]">
        <span className="w-[50px] bg-[#dedede]" />
      </div>
      <div aria-hidden="true" className="pointer-events-none absolute bottom-0 left-[853px] z-20 flex w-[214px] flex-col items-center whitespace-nowrap font-bold text-[#d6d6d6] opacity-80">
        <div lang="ar" dir="rtl" className="font-['DejaVu_Sans',sans-serif] text-[74px] leading-[76px] [-webkit-text-stroke:3px_#d6d6d6]">نفذلي</div>
        <div className="pb-[3px] text-[33px] leading-[36px]">nafezly.com</div>
      </div>
    </div>
  );
}
